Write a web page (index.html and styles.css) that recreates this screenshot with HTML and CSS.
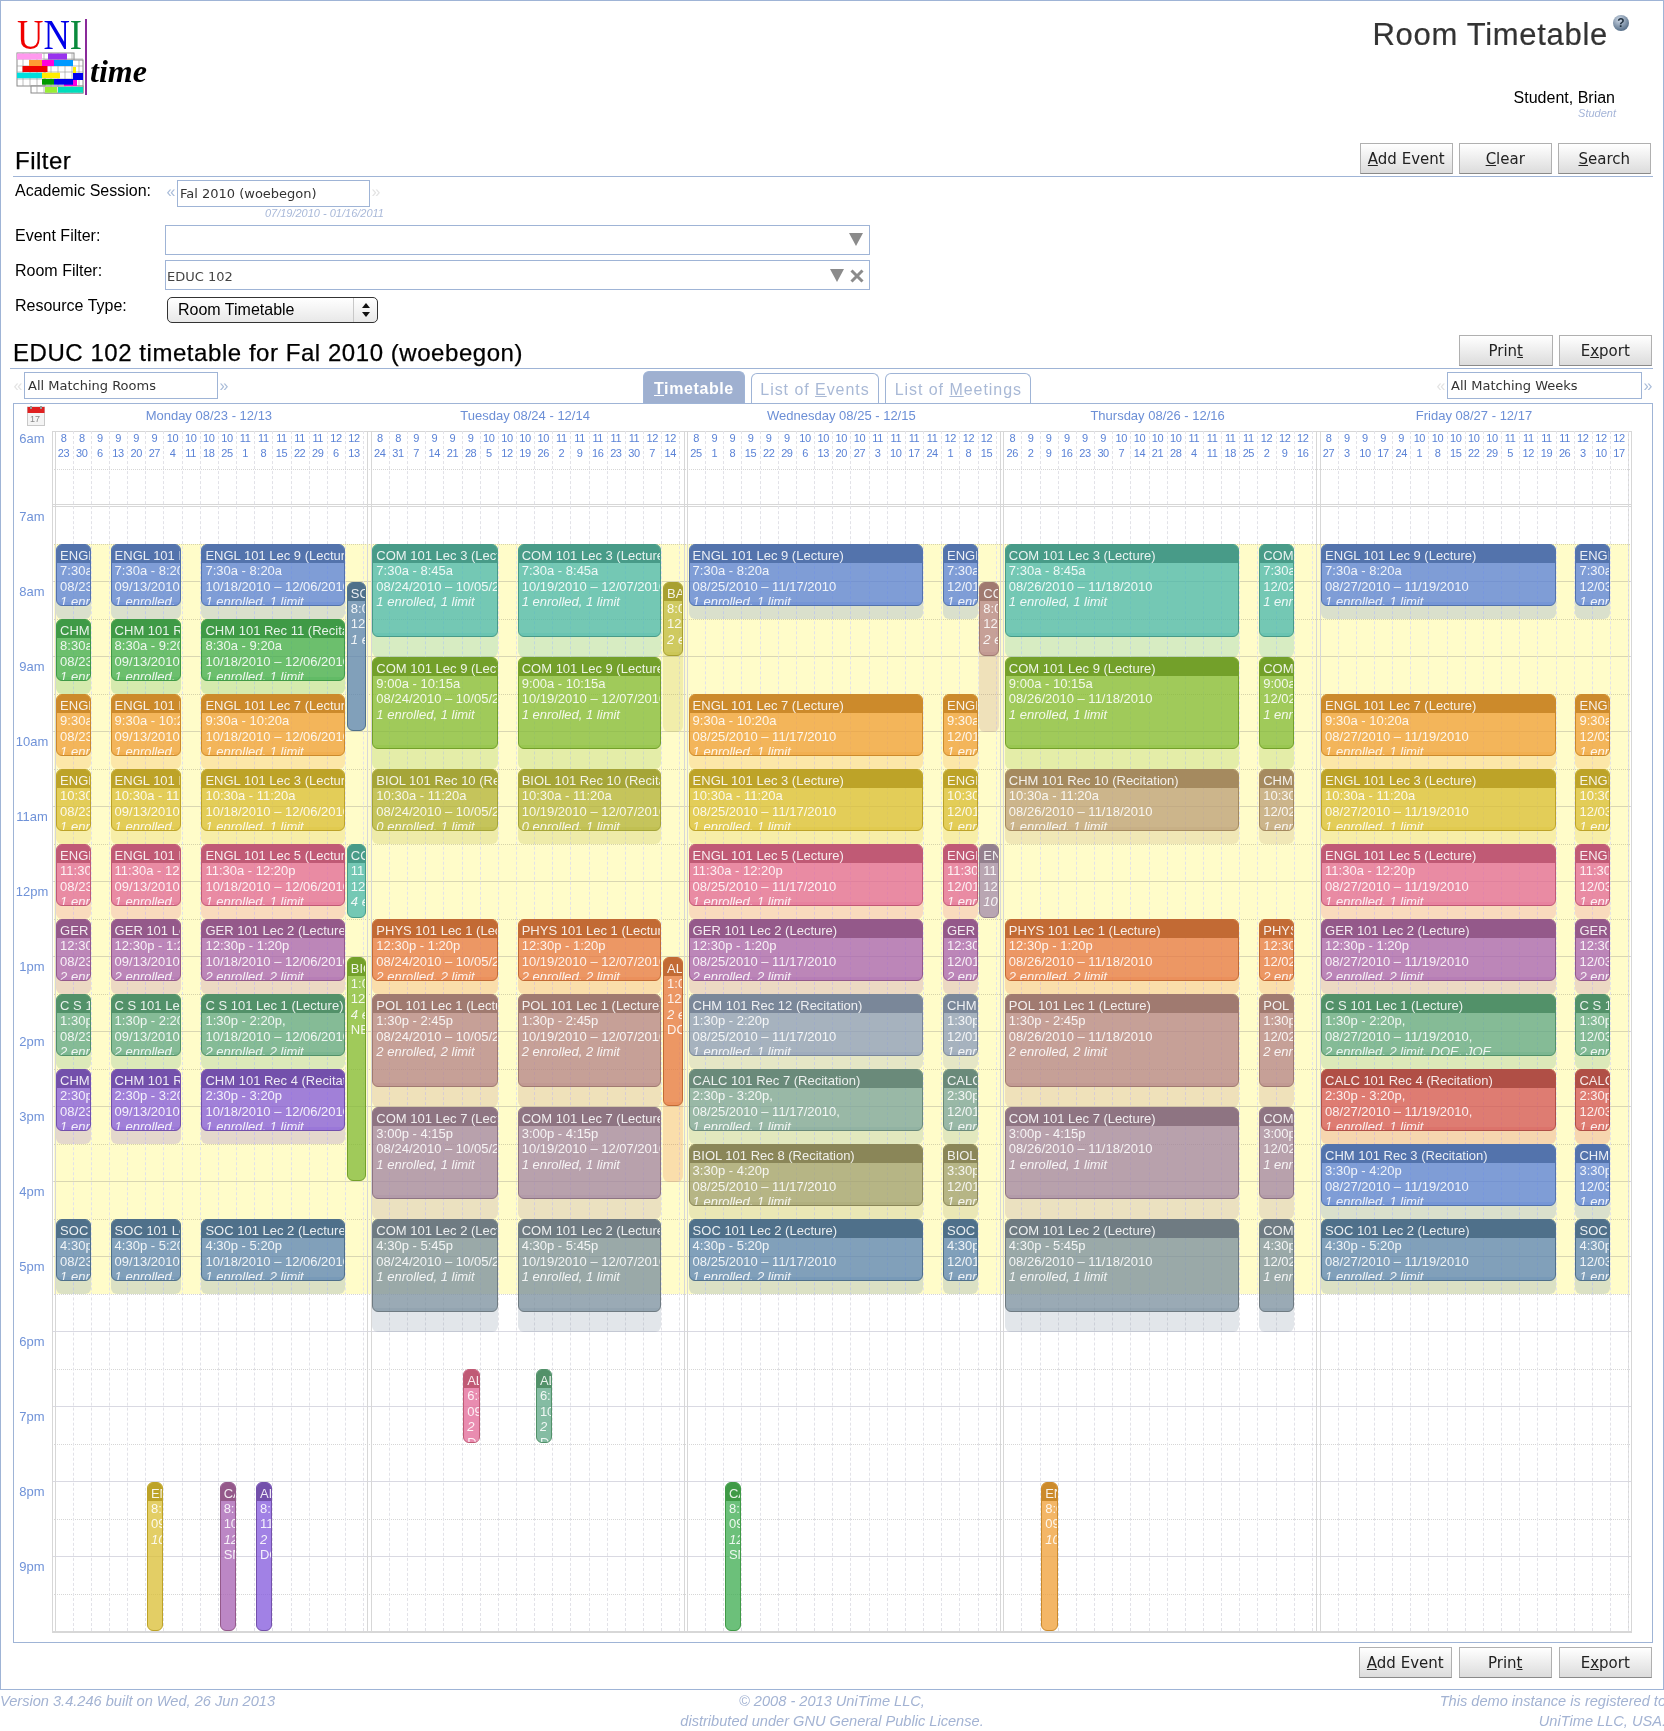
FILE: index.html
```html
<!DOCTYPE html>
<html lang="en">

<head>
<title>Room Timetable</title>
<meta charset="UTF-8">
<link rel="stylesheet" href="styles.css">
</head>

<body>
<div class="page">

<div class="head">
<svg class="logo" width="140" height="80" viewBox="0 0 140 80">
  <text x="2" y="31" class="logo-uni" textLength="65" lengthAdjust="spacingAndGlyphs"><tspan fill="#f00000">U</tspan><tspan fill="#0000e8">N</tspan><tspan fill="#0a8a3c">I</tspan></text>
  <g fill="#fff" stroke="#8a8a8a" stroke-width="1">
    <rect x="2" y="35" width="57" height="33"/>
    <rect x="30" y="42" width="38" height="33"/>
    <rect x="16" y="68" width="52" height="7"/>
  </g>
  <g stroke="#a0a0a0" stroke-width="0.7">
    <path d="M8 35v33M15 35v33M22 35v40M29 35v40M36 35v40M43 35v40M50 35v40M57 35v40M64 42v33M2 41h66M2 48h66M2 54h66M2 61h66M16 68h52"/>
  </g>
  <rect x="2" y="35.5" width="25" height="6" fill="#ff99ee"/>
  <rect x="33" y="35.5" width="19" height="6" fill="#9933ee"/>
  <rect x="14" y="42" width="13" height="6" fill="#ff9933"/>
  <rect x="27" y="42" width="12" height="6" fill="#ff00dd"/>
  <rect x="39" y="42" width="19" height="6" fill="#0099ff"/>
  <rect x="7.5" y="48" width="25" height="6" fill="#ee0000"/>
  <rect x="58" y="49" width="3" height="6" fill="#ffee00"/>
  <rect x="2" y="54.7" width="25" height="5.5" fill="#00dddd"/>
  <rect x="27" y="54.7" width="18" height="5.5" fill="#ffee00"/>
  <rect x="58" y="55" width="10" height="7" fill="#0000ee"/>
  <rect x="27" y="61" width="12" height="5.7" fill="#009900"/>
  <rect x="49" y="62" width="13" height="6" fill="#ff00dd"/>
  <rect x="39" y="61" width="19" height="5.7" fill="#0000ee"/>
  <rect x="30" y="69" width="12" height="5.7" fill="#99ee33"/>
  <rect x="43" y="69" width="25" height="5.7" fill="#00ddbb"/>
  <rect x="70" y="1" width="2" height="76" fill="#8a2a9a"/>
  <text x="75" y="64" class="logo-time">time</text>
</svg>
<div class="head-right">
<div class="page-title">Room Timetable
<svg class="help" width="16" height="16" viewBox="0 0 16 16">
  <defs><radialGradient id="helpfill" cx="0.4" cy="0.3" r="0.8"><stop offset="0" stop-color="#cdd8e6"/><stop offset="1" stop-color="#46607c"/></radialGradient></defs>
  <circle cx="8" cy="8" r="8" fill="url(#helpfill)"/>
  <text x="8" y="12" class="help-mark">?</text>
</svg>
</div>
<div class="user-name">Student, Brian</div>
<div class="user-role">Student</div>
</div>
</div>

<div class="section-head">
<div class="section-title">Filter</div>
<div class="buttons">
<button><u>A</u>dd Event</button><button><u>C</u>lear</button><button><u>S</u>earch</button>
</div>
</div>

<div class="filter">
<div class="filter-row session-row">
<div class="filter-label">Academic Session:</div>
<div>
<div class="pager"><span class="arrow">«</span><div class="box session-box">Fal 2010 (woebegon)</div><span class="arrow off">»</span></div>
<div class="session-dates">07/19/2010 - 01/16/2011</div>
</div>
</div>
<div class="filter-row">
<div class="filter-label">Event Filter:</div>
<div class="box filter-box">
<svg class="tri" width="16" height="13" viewBox="0 0 16 13"><polygon points="1,0 15,0 8,13" fill="#8b8b8b"/></svg>
</div>
</div>
<div class="filter-row">
<div class="filter-label">Room Filter:</div>
<div class="box filter-box room-box">EDUC 102
<svg class="tri" width="16" height="13" viewBox="0 0 16 13"><polygon points="1,0 15,0 8,13" fill="#8b8b8b"/></svg>
<svg class="cross" width="14" height="14" viewBox="0 0 14 14"><path d="M1.5 1.5L12.5 12.5M12.5 1.5L1.5 12.5" stroke="#8b8b8b" stroke-width="3"/></svg>
</div>
</div>
<div class="filter-row type-row">
<div class="filter-label">Resource Type:</div>
<div class="select">Room Timetable
<div class="select-arrows">
<svg width="8" height="14" viewBox="0 0 8 14"><polygon points="4,0 8,5 0,5" fill="#111"/><polygon points="4,14 8,9 0,9" fill="#111"/></svg>
</div>
</div>
</div>
</div>

<div class="section-head timetable-head">
<div class="section-title">EDUC 102 timetable for Fal 2010 (woebegon)</div>
<div class="buttons wide">
<button>Prin<u>t</u></button><button>E<u>x</u>port</button>
</div>
</div>

<div class="nav">
<div class="pager rooms"><span class="arrow off">«</span><div class="box nav-box">All Matching Rooms</div><span class="arrow">»</span></div>
<div class="tabs">
<div class="tab active"><u>T</u>imetable</div>
<div class="tab">List of <u>E</u>vents</div>
<div class="tab">List of <u>M</u>eetings</div>
</div>
<div class="pager weeks"><span class="arrow off">«</span><div class="box nav-box">All Matching Weeks</div><span class="arrow">»</span></div>
</div>

<div class="panel">
<div class="tt-corner">
<svg width="18" height="20" viewBox="0 0 18 20">
  <rect x="0.5" y="1" width="17" height="18.5" fill="#f4f4f4" stroke="#c8c8c8"/>
  <rect x="0.5" y="1" width="17" height="6" fill="#e02020"/>
  <rect x="3" y="0" width="2" height="3" fill="#999"/>
  <rect x="13" y="0" width="2" height="3" fill="#999"/>
  <text x="8" y="15.5" class="cal-day">17</text>
</svg>
</div>
<div class="tt-titles" id="tt_titles"></div>
<div class="tt-hours" id="tt_hours"></div>
<div class="tt-grid">
<div id="tt_rows"></div>
<div class="tt-band"></div>
<div class="tt-days" id="tt_days"></div>
</div>
</div>

<div class="buttons bottom">
<button><u>A</u>dd Event</button><button>Prin<u>t</u></button><button>E<u>x</u>port</button>
</div>

</div>

<div class="footer">
<div class="foot-left">Version 3.4.246 built on Wed, 26 Jun 2013</div>
<div class="foot-center">© 2008 - 2013 UniTime LLC,<br>distributed under GNU General Public License.</div>
<div class="foot-right">This demo instance is registered to<br>UniTime LLC, USA.</div>
</div>

<script src="timetable.js"></script>
</body>
</html>
```

FILE: styles.css
```css
html, body {
    margin: 0;
    overflow: hidden;
}
body {
    width: 1664px;
    font-family: "Liberation Sans", Arial, sans-serif;
    color: #000;
    background: #fff;
}
.page {
    box-sizing: border-box;
    height: 1690px;
    border: 1px solid #9fb4d6;
}

/* page header */
.head {
    display: flex;
    justify-content: space-between;
    height: 142px;
}
.logo {
    margin: 17px 0 0 14px;
}
.logo-uni {
    font-family: "Liberation Serif", serif;
    font-size: 42px;
}
.logo-time {
    font-family: "Liberation Serif", serif;
    font-size: 32px;
    font-style: italic;
    font-weight: bold;
}
.head-right {
    text-align: right;
}
.page-title {
    display: flex;
    justify-content: flex-end;
    margin: 16px 34px 0 0;
    font-size: 31px;
    line-height: 36px;
    letter-spacing: 0.7px;
    color: #333;
    -webkit-text-stroke: 0.2px #333;
}
.help {
    margin: -2px 0 0 5px;
}
.help-mark {
    font-size: 12px;
    font-weight: bold;
    fill: #20303f;
    text-anchor: middle;
    letter-spacing: 0;
    -webkit-text-stroke: 0;
}
.user-name {
    margin: 35px 48px 0 0;
    font-size: 16px;
    line-height: 19px;
}
.user-role {
    margin-right: 47px;
    font-size: 11px;
    line-height: 12px;
    font-style: italic;
    color: #a5b5d8;
}

/* section headers */
.section-head {
    display: flex;
    justify-content: space-between;
    height: 34px;
    margin: 0 10px 0 12px;
    border-bottom: 1px solid #9fb4d6;
    box-sizing: border-box;
}
.section-title {
    padding: 3px 0 0 2px;
    font-size: 24px;
    line-height: 30px;
    letter-spacing: 0.5px;
    -webkit-text-stroke: 0.25px #000;
}
.timetable-head {
    margin: 12px 10px 0 9px;
}
.timetable-head .section-title {
    padding-left: 3px;
    padding-top: 3px;
    letter-spacing: 0.55px;
}
.buttons {
    display: flex;
    gap: 5.5px;
    padding-right: 2px;
}
.buttons.wide {
    gap: 6px;
    padding-right: 1px;
}
.buttons.bottom {
    justify-content: flex-end;
    gap: 6.5px;
    padding: 4px 11px 0 0;
}
button {
    box-sizing: border-box;
    flex: none;
    width: 93.5px;
    height: 31px;
    padding: 0;
    border: 1px solid #b0b0b0;
    border-bottom-color: #8a8a8a;
    background: linear-gradient(#fff, #dcdcdc);
    font-family: "DejaVu Sans", sans-serif;
    font-size: 15px;
    color: #222;
}

/* filter form */
.filter {
    padding-left: 14px;
}
.filter-row {
    display: flex;
    margin-top: 5px;
}
.filter-label {
    width: 150px;
    padding-top: 1px;
    font-size: 16px;
    line-height: 20px;
}
.session-row {
    margin-top: 0;
    height: 43px;
}
.session-row .filter-label {
    padding-top: 4px;
}
.type-row {
    margin-top: 7px;
}
.type-row .filter-label {
    padding-top: 0;
    margin-top: -1px;
}
.pager {
    display: flex;
    align-items: center;
}
.arrow {
    width: 12px;
    font-size: 16px;
    color: #a9bcd9;
    text-align: center;
    line-height: 20px;
}
.arrow.off {
    color: #e3e3e3;
}
.box {
    box-sizing: border-box;
    border: 1px solid #9fb4d6;
    font-family: "DejaVu Sans", sans-serif;
    font-size: 13px;
    color: #333;
}
.session-box {
    width: 193px;
    height: 27px;
    margin: 3px 0 0;
    padding-left: 2px;
    line-height: 25px;
}
.session-dates {
    width: 219px;
    font-size: 11px;
    line-height: 13px;
    font-style: italic;
    color: #a9b9d9;
    text-align: right;
}
.filter-box {
    display: flex;
    align-items: center;
    justify-content: flex-end;
    width: 705px;
    height: 30px;
    padding-right: 5px;
}
.room-box {
    justify-content: flex-start;
    padding: 3px 5px 0 1px;
    color: #444;
}
.tri {
    margin-top: -1px;
}
.room-box .tri {
    margin: -2px 5px 0 auto;
}
.room-box .cross {
    margin-top: -2px;
}
.select {
    box-sizing: border-box;
    display: flex;
    align-items: center;
    justify-content: space-between;
    width: 211px;
    height: 26px;
    margin-left: 2px;
    padding-left: 10px;
    border: 1px solid #333;
    border-radius: 5px;
    background: linear-gradient(#fff, #e8e8e8);
    font-size: 16px;
}
.select-arrows {
    display: flex;
    align-items: center;
    justify-content: center;
    width: 23px;
    height: 100%;
    border-left: 1px solid #c8c8c8;
}

/* rooms, tabs and weeks above the timetable */
.nav {
    display: grid;
    grid-template-columns: 642px 388px 1fr;
    height: 34px;
}
.rooms {
    align-self: start;
    margin: 3px 0 0 11px;
}
.weeks {
    align-self: start;
    justify-content: flex-end;
    margin: 3px 9px 0 0;
}
.nav-box {
    width: 194px;
    height: 27px;
    padding-left: 3px;
    line-height: 25px;
}
.weeks .nav-box {
    width: 195px;
}
.tabs {
    display: flex;
    align-items: flex-end;
    gap: 6px;
}
.tab {
    box-sizing: border-box;
    height: 30px;
    padding: 0 8.5px;
    border: 1px solid #9fb4d6;
    border-bottom: none;
    border-radius: 6px 6px 0 0;
    font-size: 16px;
    line-height: 32px;
    letter-spacing: 0.95px;
    color: #a9b9d6;
    white-space: nowrap;
}
.tab.active {
    height: 32px;
    padding: 0 10px;
    background: #9fb0d0;
    color: #fff;
    font-weight: bold;
    letter-spacing: 0.6px;
    line-height: 34px;
}

/* timetable */
.panel {
    box-sizing: border-box;
    display: grid;
    grid-template-columns: 38px 1580px;
    grid-template-rows: 27px auto;
    height: 1240px;
    margin: 0 10px 0 12px;
    border: 1px solid #9fb4d6;
}
.tt-corner {
    padding: 2px 0 0 13px;
}
.tt-titles {
    display: flex;
    gap: 2.5px;
    padding-left: 2.5px;
}
.tt-title {
    box-sizing: border-box;
    flex: none;
    width: 313.75px;
    padding: 4px 5px 0 0;
    font-size: 13px;
    line-height: 16px;
    color: #6c8fd6;
    text-align: center;
}
.tt-title:last-child {
    width: 309px;
    padding-right: 0;
}
.tt-hour {
    height: 75px;
    box-sizing: border-box;
    padding: 3px 2px 0 0;
    font-size: 13px;
    line-height: 16px;
    color: #6f92d8;
    text-align: center;
}
.tt-hour:first-child {
    padding-top: 0;
}
.tt-grid {
    position: relative;
    box-sizing: border-box;
    height: 1202px;
    border: 1px solid #d7d7d7;
    border-bottom-width: 2px;
}
.tt-row {
    position: relative;
    box-sizing: border-box;
    height: 75px;
    border-bottom: 1px solid #d9d9e2;
}
.tt-row:first-child {
    border-bottom: 3px double #d7d7d7;
}
.tt-row:last-child {
    border-bottom: none;
}
.tt-row::after {
    content: "";
    position: absolute;
    left: 1px;
    right: 1px;
    top: 37px;
    border-top: 1px dotted #d6d6d6;
}
.tt-band {
    position: absolute;
    left: 1px;
    right: 1px;
    top: 112px;
    height: 750px;
    background: #fffcc9;
    mix-blend-mode: multiply;
}
.tt-days {
    position: absolute;
    top: 0;
    left: 0;
    right: 0;
    bottom: 0;
    display: flex;
    gap: 2.5px;
    padding-left: 1.5px;
}
.tt-day {
    position: relative;
    flex: none;
    display: flex;
    box-sizing: border-box;
    width: 313.75px;
    border-left: 1px solid #d7d7d7;
    border-right: 1px solid #d7d7d7;
}
.tt-day:last-child {
    width: 309px;
}
.tt-week {
    box-sizing: border-box;
    flex: none;
    width: 18.17px;
    margin-top: -1px;
    padding-right: 1px;
    border-right: 1px dashed #e2e2e8;
    font-size: 11px;
    line-height: 15px;
    letter-spacing: -0.4px;
    color: #5a82d6;
    text-align: center;
}
.tt-week:last-of-type {
    border-right: none;
}

/* meetings */
.meeting-gap, .meeting {
    position: absolute;
    box-sizing: border-box;
    border-radius: 6px;
}
.meeting-gap {
    border-radius: 0 0 6px 6px;
    background: var(--body);
    opacity: 0.29;
}
.meeting {
    overflow: hidden;
    border: 1px solid var(--head);
    background: var(--body);
    font-size: 13px;
    line-height: 15.5px;
    color: rgba(255, 255, 255, 0.88);
    white-space: nowrap;
}
.meeting div {
    padding-left: 3px;
}
.meeting .meeting-title {
    height: 18px;
    padding-top: 3px;
    box-sizing: border-box;
    background: var(--head);
    line-height: 15px;
}
.meeting .meeting-note {
    font-style: italic;
}
.blue { --head: #5373ac; --body: rgba(84, 125, 217, 0.75); }
.green { --head: #3f9a46; --body: rgba(59, 171, 78, 0.75); }
.orange { --head: #cc8a2b; --body: rgba(239, 158, 52, 0.75); }
.yellow { --head: #bda328; --body: rgba(218, 190, 50, 0.75); }
.pink { --head: #c05a75; --body: rgba(226, 101, 149, 0.75); }
.mauve { --head: #94598a; --body: rgba(166, 95, 177, 0.75); }
.forest { --head: #529169; --body: rgba(92, 166, 132, 0.75); }
.violet { --head: #7350ab; --body: rgba(130, 87, 220, 0.75); }
.steel { --head: #4f708a; --body: rgba(87, 130, 180, 0.75); }
.teal { --head: #489b88; --body: rgba(70, 183, 172, 0.75); }
.lime { --head: #73a02a; --body: rgba(128, 186, 52, 0.75); }
.olive { --head: #a5a538; --body: rgba(178, 178, 54, 0.75); }
.coral { --head: #c26a34; --body: rgba(230, 117, 65, 0.75); }
.rose { --head: #a07a70; --body: rgba(179, 130, 133, 0.75); }
.plum { --head: #8e7482; --body: rgba(160, 131, 161, 0.75); }
.slate { --head: #6f7b82; --body: rgba(120, 141, 156, 0.75); }
.smoke { --head: #7a8799; --body: rgba(136, 153, 186, 0.75); }
.sage { --head: #6a8a7a; --body: rgba(119, 161, 153, 0.75); }
.moss { --head: #8a8658; --body: rgba(158, 157, 110, 0.75); }
.tan { --head: #a58a5f; --body: rgba(187, 158, 117, 0.75); }
.red { --head: #b04f46; --body: rgba(211, 81, 84, 0.75); }
.gold { --head: #a8a030; --body: rgba(191, 186, 60, 0.75); }
.ash { --head: #93808e; --body: rgba(162, 138, 170, 0.75); }

/* footer */
.footer {
    display: grid;
    grid-template-columns: 1fr 1fr 1fr;
    padding-top: 2px;
    font-size: 14.6px;
    line-height: 19.5px;
    font-style: italic;
    color: #a3b3d3;
    white-space: nowrap;
}
.foot-center {
    text-align: center;
}
.foot-right {
    margin-right: -2px;
    text-align: right;
}
.cal-day {
    font-size: 9px;
    fill: #888;
    text-anchor: middle;
}
```

FILE: timetable.js
```js
"use strict";

const SLOT = 6.25 / 5;  // pixels per minute
const WEEK = 18.17;
const FIRST = 6 * 60;

const dayNames = ["Monday", "Tuesday", "Wednesday", "Thursday", "Friday"];

// [title, colour, from, to, note, comma after time and date]
const monday = [
    ["ENGL 101 Lec 9 (Lecture)", "blue", "7:30", "8:20", "1 enrolled, 1 limit"],
    ["CHM 101 Rec 11 (Recitation)", "green", "8:30", "9:20", "1 enrolled, 1 limit"],
    ["ENGL 101 Lec 7 (Lecture)", "orange", "9:30", "10:20", "1 enrolled, 1 limit"],
    ["ENGL 101 Lec 3 (Lecture)", "yellow", "10:30", "11:20", "1 enrolled, 1 limit"],
    ["ENGL 101 Lec 5 (Lecture)", "pink", "11:30", "12:20", "1 enrolled, 1 limit"],
    ["GER 101 Lec 2 (Lecture)", "mauve", "12:30", "13:20", "2 enrolled, 2 limit"],
    ["C S 101 Lec 1 (Lecture)", "forest", "13:30", "14:20", "2 enrolled, 2 limit", true],
    ["CHM 101 Rec 4 (Recitation)", "violet", "14:30", "15:20", "1 enrolled, 1 limit"],
    ["SOC 101 Lec 2 (Lecture)", "steel", "16:30", "17:20", "1 enrolled, 2 limit"],
];
const tuesday = [
    ["COM 101 Lec 3 (Lecture)", "teal", "7:30", "8:45", "1 enrolled, 1 limit"],
    ["COM 101 Lec 9 (Lecture)", "lime", "9:00", "10:15", "1 enrolled, 1 limit"],
    ["BIOL 101 Rec 10 (Recitation)", "olive", "10:30", "11:20", "0 enrolled, 1 limit"],
    ["PHYS 101 Lec 1 (Lecture)", "coral", "12:30", "13:20", "2 enrolled, 2 limit"],
    ["POL 101 Lec 1 (Lecture)", "rose", "13:30", "14:45", "2 enrolled, 2 limit"],
    ["COM 101 Lec 7 (Lecture)", "plum", "15:00", "16:15", "1 enrolled, 1 limit"],
    ["COM 101 Lec 2 (Lecture)", "slate", "16:30", "17:45", "1 enrolled, 1 limit"],
];
const wednesday = [
    ["ENGL 101 Lec 9 (Lecture)", "blue", "7:30", "8:20", "1 enrolled, 1 limit"],
    ["ENGL 101 Lec 7 (Lecture)", "orange", "9:30", "10:20", "1 enrolled, 1 limit"],
    ["ENGL 101 Lec 3 (Lecture)", "yellow", "10:30", "11:20", "1 enrolled, 1 limit"],
    ["ENGL 101 Lec 5 (Lecture)", "pink", "11:30", "12:20", "1 enrolled, 1 limit"],
    ["GER 101 Lec 2 (Lecture)", "mauve", "12:30", "13:20", "2 enrolled, 2 limit"],
    ["CHM 101 Rec 12 (Recitation)", "smoke", "13:30", "14:20", "1 enrolled, 1 limit"],
    ["CALC 101 Rec 7 (Recitation)", "sage", "14:30", "15:20", "1 enrolled, 1 limit", true],
    ["BIOL 101 Rec 8 (Recitation)", "moss", "15:30", "16:20", "1 enrolled, 1 limit"],
    ["SOC 101 Lec 2 (Lecture)", "steel", "16:30", "17:20", "1 enrolled, 2 limit"],
];
const thursday = tuesday.map(function (row) {
    return row[0].startsWith("BIOL")
        ? ["CHM 101 Rec 10 (Recitation)", "tan", "10:30", "11:20", "1 enrolled, 1 limit"]
        : row;
});
const friday = [
    ["ENGL 101 Lec 9 (Lecture)", "blue", "7:30", "8:20", "1 enrolled, 1 limit"],
    ["ENGL 101 Lec 7 (Lecture)", "orange", "9:30", "10:20", "1 enrolled, 1 limit"],
    ["ENGL 101 Lec 3 (Lecture)", "yellow", "10:30", "11:20", "1 enrolled, 1 limit"],
    ["ENGL 101 Lec 5 (Lecture)", "pink", "11:30", "12:20", "1 enrolled, 1 limit"],
    ["GER 101 Lec 2 (Lecture)", "mauve", "12:30", "13:20", "2 enrolled, 2 limit"],
    ["C S 101 Lec 1 (Lecture)", "forest", "13:30", "14:20", "2 enrolled, 2 limit, DOE, JOE", true],
    ["CALC 101 Rec 4 (Recitation)", "red", "14:30", "15:20", "1 enrolled, 1 limit", true],
    ["CHM 101 Rec 3 (Recitation)", "blue", "15:30", "16:20", "1 enrolled, 1 limit"],
    ["SOC 101 Lec 2 (Lecture)", "steel", "16:30", "17:20", "1 enrolled, 2 limit"],
];

// [first week, number of weeks, dates]
const blocks = [
    { rows: monday, spans: [
        [0, 2, "08/23/2010 – 08/30/2010"],
        [3, 4, "09/13/2010 – 10/04/2010"],
        [8, 8, "10/18/2010 – 12/06/2010"] ] },
    { rows: tuesday, spans: [
        [0, 7, "08/24/2010 – 10/05/2010"],
        [8, 8, "10/19/2010 – 12/07/2010"] ] },
    { rows: wednesday, spans: [
        [0, 13, "08/25/2010 – 11/17/2010"],
        [14, 2, "12/01/2010 – 12/15/2010"] ] },
    { rows: thursday, spans: [
        [0, 13, "08/26/2010 – 11/18/2010"],
        [14, 2, "12/02/2010 – 12/16/2010"] ] },
    { rows: friday, spans: [
        [0, 13, "08/27/2010 – 11/19/2010"],
        [14, 2, "12/03/2010 – 12/17/2010"] ] },
];

// one-off events: [day, week, title, colour, from, to, end of gap, date, note, name]
const singles = [
    [0, 16, "SOC 101 Final", "steel", "8:00", "10:00", "10:00", "12/13/2010", "1 enrolled"],
    [0, 16, "COM 101 Final", "teal", "11:30", "12:30", "12:30", "12/13/2010", "4 enrolled"],
    [0, 16, "BIOL 101 Final", "lime", "13:00", "16:00", "16:00", "12/13/2010", "4 enrolled", "NEWMAN"],
    [1, 16, "BAND 101 Final", "gold", "8:00", "9:00", "10:00", "12/14/2010", "2 enrolled"],
    [1, 16, "ALGB 101 Final", "coral", "13:00", "15:00", "16:00", "12/14/2010", "2 enrolled", "DOE"],
    [2, 16, "COM 101 Final", "rose", "8:00", "9:00", "10:00", "12/15/2010", "2 enrolled"],
    [2, 16, "ENGL 101 Final", "ash", "11:30", "12:30", "12:30", "12/15/2010", "10 enrolled"],
    [0, 5, "ENGL 101 Midterm", "yellow", "20:00", "22:00", "22:00", "09/27/2010", "10 enrolled"],
    [0, 9, "CALC 101 Midterm", "mauve", "20:00", "22:00", "22:00", "10/25/2010", "12 enrolled", "SMITH"],
    [0, 11, "ALGB 101 Midterm", "violet", "20:00", "22:00", "22:00", "11/08/2010", "2", "DOE"],
    [1, 5, "ALGB 101 Quiz", "pink", "18:30", "19:30", "19:30", "09/28/2010", "2", "DOE"],
    [1, 9, "ALGB 101 Quiz", "forest", "18:30", "19:30", "19:30", "10/26/2010", "2", "DOE"],
    [2, 2, "CALC 101 Midterm", "green", "20:00", "22:00", "22:00", "09/08/2010", "12 enrolled", "SMITH"],
    [3, 2, "ENGL 101 Midterm", "orange", "20:00", "22:00", "22:00", "09/09/2010", "10 enrolled"],
];

function minutes(text) {
    const parts = text.split(":");
    return parseInt(parts[0]) * 60 + parseInt(parts[1]);
}

function clock(text) {
    const m = minutes(text);
    const h = Math.floor(m / 60);
    const min = String(m % 60).padStart(2, "0");
    return (h > 12 ? h - 12 : h) + ":" + min + (h >= 12 ? "p" : "a");
}

function element(parent, className, text) {
    const e = document.createElement("div");
    e.className = className;
    if (text !== undefined) e.textContent = text;
    parent.appendChild(e);
    return e;
}

function place(e, left, width, top, height) {
    e.style.left = left + "px";
    e.style.width = width + "px";
    e.style.top = top + "px";
    e.style.height = height + "px";
}

// Draw one meeting and the pale break that follows it
function addMeeting(day, week, count, m) {
    const top = (minutes(m.from) - FIRST) * SLOT - 0.5;
    const bottom = (minutes(m.to) - FIRST) * SLOT - 0.5;
    const gapEnd = (minutes(m.gapTo) - FIRST) * SLOT - 0.5;
    const left = week * WEEK + 0.6;
    let width = count * WEEK - 1.8;
    if (week === 16) width += 3.2;

    if (gapEnd > bottom) {
        const gap = element(day, "meeting-gap " + m.colour);
        place(gap, left, width, bottom - 5, gapEnd - bottom + 5);
    }
    const box = element(day, "meeting " + m.colour);
    place(box, left, width, top, bottom - top - 1);
    element(box, "meeting-title", m.title);
    element(box, "", clock(m.from) + " - " + clock(m.to) + (m.comma ? "," : ""));
    element(box, "", m.date + (m.comma ? "," : ""));
    element(box, "meeting-note", m.note);
    if (m.name) element(box, "", m.name);
}

const titles = document.getElementById("tt_titles");
const hours = document.getElementById("tt_hours");
const rows = document.getElementById("tt_rows");
const days = document.getElementById("tt_days");

for (let h = 6; h < 22; h++) {
    const label = (h > 12 ? h - 12 : h) + (h >= 12 ? "pm" : "am");
    element(hours, "tt-hour", label);
    element(rows, "tt-row");
}

dayNames.forEach(function (name, d) {
    const pad = function (n) { return String(n).padStart(2, "0"); };
    const start = new Date(2010, 7, 23 + d);
    const end = new Date(2010, 7, 23 + d + 16 * 7);
    element(titles, "tt-title", name + " " + pad(start.getMonth() + 1) + "/" + pad(start.getDate())
        + " - " + pad(end.getMonth() + 1) + "/" + pad(end.getDate()));

    const day = element(days, "tt-day");
    for (let w = 0; w < 17; w++) {
        const date = new Date(2010, 7, 23 + d + w * 7);
        const cell = element(day, "tt-week");
        cell.innerHTML = (date.getMonth() + 1) + "<br>" + date.getDate();
    }

    const block = blocks[d];
    for (const span of block.spans) {
        for (const row of block.rows) {
            const length = minutes(row[3]) - minutes(row[2]);
            const gapTo = minutes(row[3]) + (length > 50 ? 15 : 10);
            addMeeting(day, span[0], span[1], {
                title: row[0], colour: row[1], from: row[2], to: row[3],
                gapTo: Math.floor(gapTo / 60) + ":" + String(gapTo % 60).padStart(2, "0"),
                date: span[2], note: row[4], comma: row[5],
            });
        }
    }
    for (const s of singles) {
        if (s[0] !== d) continue;
        addMeeting(day, s[1], 1, {
            title: s[2], colour: s[3], from: s[4], to: s[5], gapTo: s[6],
            date: s[7], note: s[8], name: s[9],
        });
    }
});
```
